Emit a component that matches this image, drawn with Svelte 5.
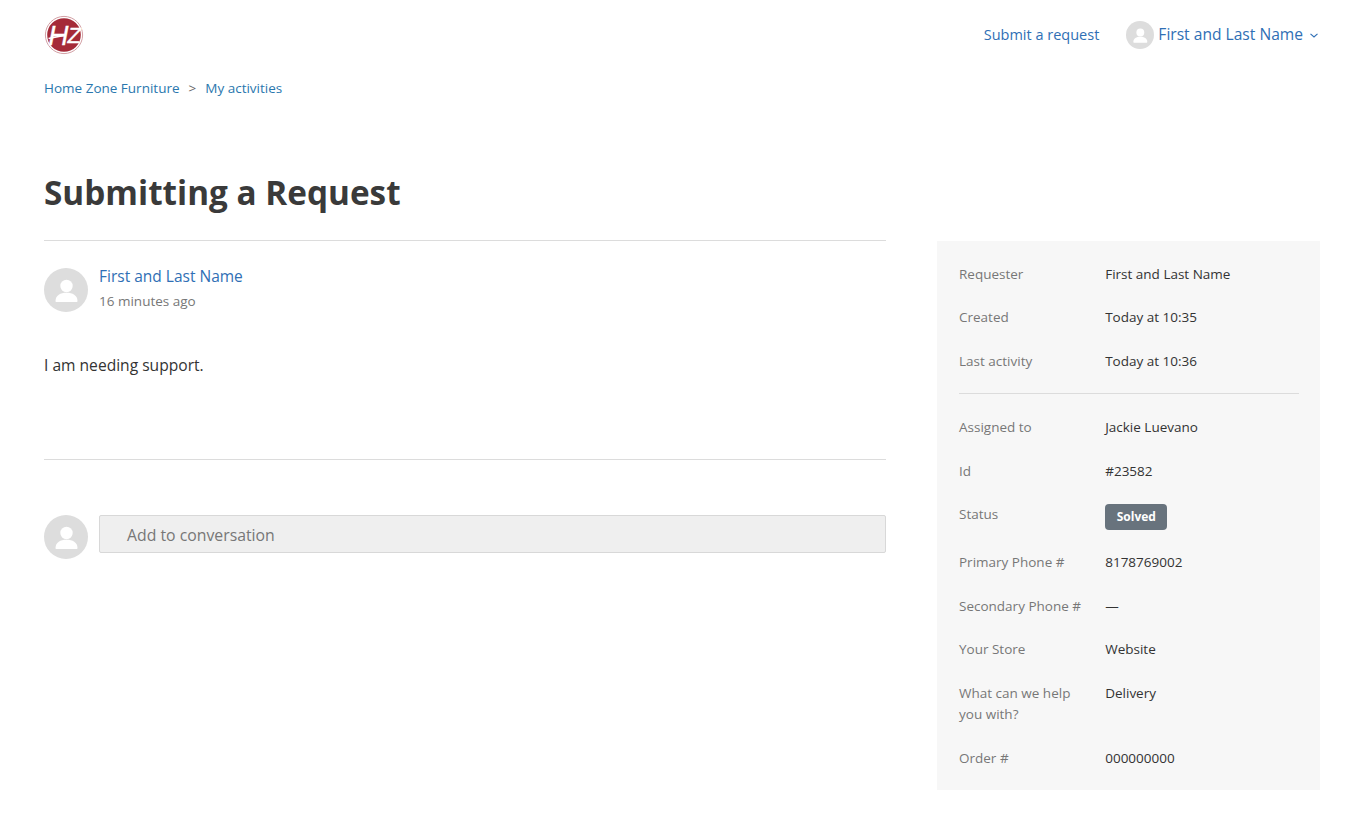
<script>
  const topFields = [
    { label: 'Requester', value: 'First and Last Name' },
    { label: 'Created', value: 'Today at 10:35' },
    { label: 'Last activity', value: 'Today at 10:36' }
  ];
  const bottomFields = [
    { label: 'Assigned to', value: 'Jackie Luevano' },
    { label: 'Id', value: '#23582' },
    { label: 'Status', value: 'Solved', badge: true },
    { label: 'Primary Phone #', value: '8178769002' },
    { label: 'Secondary Phone #', value: '—' },
    { label: 'Your Store', value: 'Website' },
    { label: 'What can we help you with?', value: 'Delivery' },
    { label: 'Order #', value: '000000000' }
  ];
</script>

{#snippet avatar(size)}
  <svg class="avatar" width={size} height={size} viewBox="0 0 44 44" aria-hidden="true">
    <circle cx="22" cy="22" r="22" fill="#dddddd" />
    <circle cx="22.5" cy="18" r="6.2" fill="#fff" />
    <path d="M11.5 33c0-5.6 5-8.2 11-8.2s11 2.6 11 8.2c0 .6-.4 1-1 1h-20c-.6 0-1-.4-1-1z" fill="#fff" />
  </svg>
{/snippet}

{#snippet fieldRow(field)}
  <div class="row" class:tall={field.badge}>
    <dt>{field.label}</dt>
    <dd>
      {#if field.badge}
        <span class="badge">{field.value}</span>
      {:else}
        {field.value}
      {/if}
    </dd>
  </div>
{/snippet}

<div class="page">
  <header class="topbar">
    <svg class="logo" width="40" height="40" viewBox="0 0 40 40" role="img" aria-label="Home Zone">
      <circle cx="20" cy="20" r="18.6" fill="#fff" stroke="#d3a0a5" stroke-width="1" />
      <circle cx="20" cy="20" r="16.8" fill="#a52a38" />
      <text x="20" y="30" text-anchor="middle" class="logo-text"><tspan class="logo-h">H</tspan><tspan dy="-2">Z</tspan></text>
      <path d="M4.500 23.500 20 20.500" stroke="#fff" stroke-width="1.6" />
    </svg>
    <nav class="user-nav">
      <a href="#top" class="submit">Submit a request</a>
      <a href="#top" class="user">
        {@render avatar(28)}
        <span>First and Last Name</span>
        <svg class="chev" width="8" height="5" viewBox="0 0 8 5" aria-hidden="true">
          <path d="M.5 .8 4 4 7.500 .8" fill="none" stroke="#2f6fb5" stroke-width="1.1" />
        </svg>
      </a>
    </nav>
  </header>

  <ol class="crumbs">
    <li><a href="#top">Home Zone Furniture</a></li>
    <li class="sep">&gt;</li>
    <li><a href="#top">My activities</a></li>
  </ol>

  <h1>Submitting a Request</h1>

  <div class="columns">
    <main class="thread">
      <article class="comment">
        <div class="author">
          {@render avatar(44)}
          <div class="meta">
            <a href="#top" class="name">First and Last Name</a>
            <span class="time">16 minutes ago</span>
          </div>
        </div>
        <p class="body">I am needing support.</p>
      </article>

      <div class="reply">
        {@render avatar(44)}
        <div class="input">Add to conversation</div>
      </div>
    </main>

    <aside class="details">
      <dl class="group first">
        {#each topFields as field}
          {@render fieldRow(field)}
        {/each}
      </dl>
      <dl class="group rest">
        {#each bottomFields as field}
          {@render fieldRow(field)}
        {/each}
      </dl>
    </aside>
  </div>
</div>

<style>
  :global(body) {
    margin: 0;
    background: #fff;
    color: #333;
    font-family: "Open Sans", "Noto Sans", sans-serif;
  }

  a {
    color: #2f6fb5;
    text-decoration: none;
  }

  .page {
    padding: 0 31px 0 44px;
  }

  .topbar {
    display: flex;
    justify-content: space-between;
    align-items: center;
    height: 70px;
  }

  .logo {
    display: block;
  }

  .logo-text {
    font-family: "Liberation Sans", sans-serif;
    font-style: italic;
    font-size: 22px;
    fill: #fff;
    stroke: #fff;
    stroke-width: 0.3px;
    letter-spacing: -1px;
  }

  .logo-h {
    font-size: 28px;
  }

  .user-nav {
    display: flex;
    align-items: center;
    gap: 27px;
    padding-right: 2px;
  }

  .submit {
    font-size: 14.5px;
    padding-bottom: 2px;
  }

  .user {
    display: flex;
    align-items: center;
    gap: 4px;
    font-size: 15.6px;
  }

  .user span {
    padding-bottom: 2px;
  }

  .chev {
    margin-left: 3px;
    margin-top: 1px;
  }

  .avatar {
    display: block;
    flex: none;
  }

  .crumbs {
    display: flex;
    gap: 9px;
    list-style: none;
    margin: 8px 0 0;
    padding: 0;
    font-size: 13.5px;
    line-height: 20px;
  }

  .crumbs a {
    color: #2a77ae;
  }

  .sep {
    color: #666;
  }

  h1 {
    margin: 72px 0 0;
    font-size: 33.3px;
    line-height: 44px;
    font-weight: 700;
    color: #3a3a3a;
  }

  .columns {
    display: flex;
    justify-content: space-between;
    align-items: flex-start;
    margin-top: 26px;
  }

  .thread {
    width: 842px;
    border-top: 1px solid #dcdcdc;
  }

  .comment {
    padding: 27px 0 0;
    height: 191px;
    border-bottom: 1px solid #dcdcdc;
  }

  .author {
    display: flex;
    gap: 11px;
  }

  .meta {
    display: flex;
    flex-direction: column;
  }

  .name {
    font-size: 15.5px;
    line-height: 17px;
  }

  .time {
    font-size: 13.5px;
    line-height: 17px;
    margin-top: 8px;
    color: #777;
  }

  .body {
    margin: 41px 0 0;
    font-size: 15.6px;
    line-height: 24px;
    color: #333;
  }

  .reply {
    display: flex;
    gap: 11px;
    margin-top: 55px;
  }

  .input {
    flex: 1;
    height: 36px;
    box-sizing: content-box;
    border: 1px solid #d8d8d8;
    border-radius: 2px;
    background: #efefef;
    padding-left: 27px;
    font-size: 15.8px;
    line-height: 38px;
    color: #777;
  }

  .details {
    width: 383px;
    box-sizing: border-box;
    margin-top: 1px;
    background: #f7f7f7;
    padding: 22.5px 21px 21px 22px;
    font-size: 13.5px;
    line-height: 21px;
  }

  dl {
    margin: 0;
  }

  .group.first {
    border-bottom: 1px solid #dcdcdc;
    padding-bottom: 21.5px;
    margin-bottom: 23px;
  }

  .row {
    display: flex;
    margin-bottom: 22.5px;
  }

  .rest .row:nth-last-child(2) {
    margin-bottom: 23px;
  }

  .group .row:last-child {
    margin-bottom: 0;
  }

  dt {
    width: 146.2px;
    padding-right: 20px;
    box-sizing: border-box;
    color: #777;
  }

  dd {
    margin: 0;
    color: #333;
  }

  .badge {
    display: inline-block;
    background: #68737d;
    color: #fff;
    font-weight: 700;
    font-size: 12px;
    line-height: 18px;
    padding: 4px 11.5px;
    border-radius: 4px;
  }

  .row.tall {
    margin-bottom: 22.3px;
  }
</style>
